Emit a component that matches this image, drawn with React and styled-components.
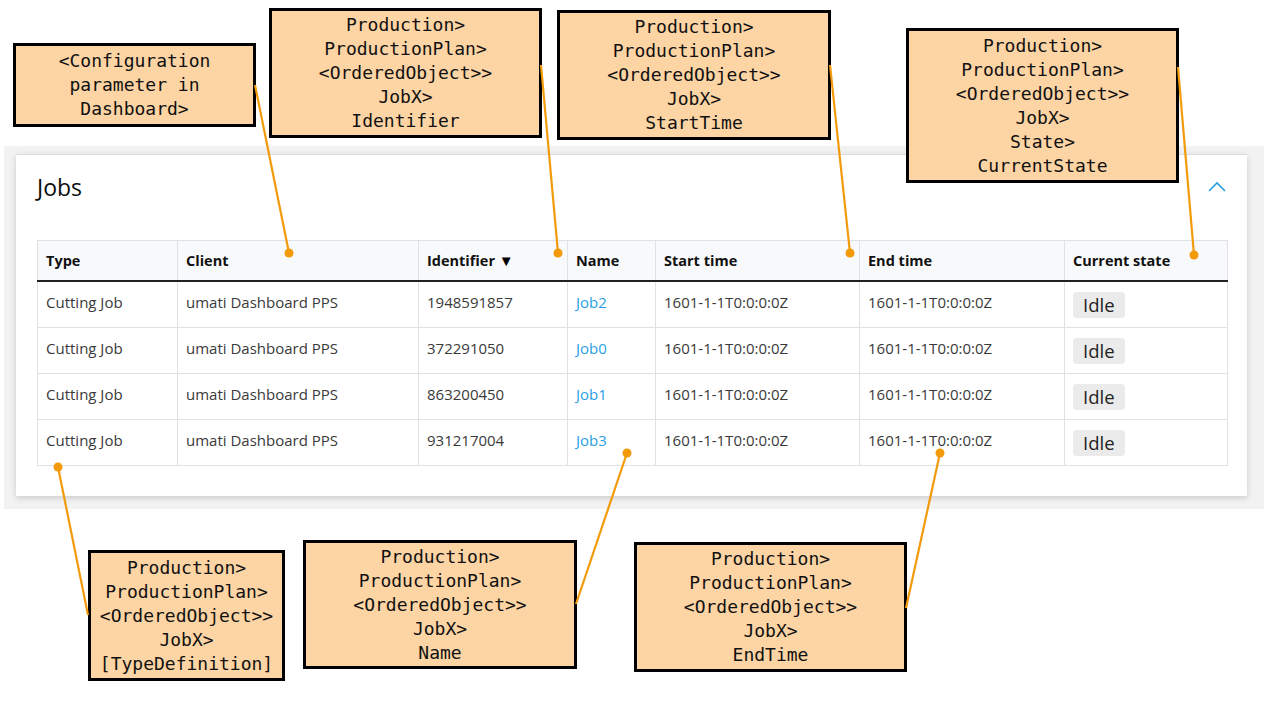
import React from "react";
import styled, { createGlobalStyle } from "styled-components";

const GlobalStyle = createGlobalStyle`
  html, body {
    margin: 0;
    padding: 0;
    background: #ffffff;
  }
`;

// whole annotated canvas
const Canvas = styled.div`
  position: relative;
  width: 1278px;
  height: 708px;
  overflow: hidden;
  font-family: "Open Sans", "Noto Sans", sans-serif;
`;

const Backdrop = styled.section`
  margin: 146px 0 0 4px;
  width: 1260px;
  box-sizing: border-box;
  padding: 8px 17px 13px 12px;
  background: #f2f2f3;
`;

const Card = styled.div`
  background: #ffffff;
  border-top: 1px solid #dcdcdc;
  box-shadow: 0 2px 6px rgba(0, 0, 0, 0.16);
  padding: 20px 20px 30px 21px;
`;

const CardHeader = styled.div`
  display: flex;
  justify-content: space-between;
  align-items: center;
  height: 24px;
  margin-bottom: 41px;
`;

const Title = styled.h2`
  margin: 0;
  font-size: 23px;
  line-height: 24px;
  font-weight: 400;
  color: #0d0d0d;
`;

const Toggle = styled.button`
  border: 0;
  background: none;
  padding: 0;
  margin-right: 1px;
  display: flex;
`;

const Table = styled.table`
  width: 1190px;
  table-layout: fixed;
  border-collapse: collapse;
  font-size: 15px;
  line-height: 21px;
`;

const Th = styled.th`
  text-align: left;
  font-size: 14.5px;
  font-weight: 700;
  color: #111;
  background: #f8f9fa;
  padding: 9px 8px;
  border: 1px solid #dee2e6;
  border-bottom: 2px solid #222;
`;

const SortArrow = styled.span`
  font-size: 15px;
  color: #000;
`;

const Td = styled.td`
  vertical-align: top;
  color: #3a3a3a;
  padding: 10px 8px 9px 8px;
  border: 1px solid #dee2e6;
  white-space: nowrap;
`;

const JobLink = styled.a`
  color: #2b9fe3;
  text-decoration: none;
`;

const Badge = styled.span`
  display: inline-block;
  padding: 1px 10px 2px 10px;
  border-radius: 4px;
  background: #ebebeb;
  color: #222;
  font-size: 18.5px;
  line-height: 23px;
`;

// annotation boxes
const Callout = styled.div`
  position: absolute;
  left: ${(p) => p.x}px;
  top: ${(p) => p.y}px;
  width: ${(p) => p.w}px;
  height: ${(p) => p.h}px;
  box-sizing: border-box;
  border: 3px solid #000;
  background: #fdd4a4;
  display: flex;
  flex-direction: column;
  justify-content: center;
  align-items: center;
  font-family: "DejaVu Sans Mono", "Liberation Mono", monospace;
  font-size: 18px;
  line-height: 24px;
  color: #111;
  text-align: center;
  white-space: nowrap;
  z-index: 2;
`;

const Connectors = styled.svg`
  position: absolute;
  left: 0;
  top: 0;
  pointer-events: none;
  z-index: 3;
`;

const columns = [140, 241, 149, 88, 204, 205, 163];

const jobs = [
  { id: "1948591857", name: "Job2" },
  { id: "372291050", name: "Job0" },
  { id: "863200450", name: "Job1" },
  { id: "931217004", name: "Job3" },
];

const path = ["Production>", "ProductionPlan>", "<OrderedObject>>", "JobX>"];

const callouts = [
  { x: 13, y: 43, w: 243, h: 84, lines: ["<Configuration", "parameter in", "Dashboard>"] },
  { x: 269, y: 8, w: 273, h: 130, lines: [...path, "Identifier"] },
  { x: 557, y: 10, w: 274, h: 130, lines: [...path, "StartTime"] },
  { x: 906, y: 28, w: 273, h: 155, lines: [...path, "State>", "CurrentState"] },
  { x: 88, y: 550, w: 197, h: 131, lines: [...path, "[TypeDefinition]"] },
  { x: 303, y: 540, w: 274, h: 129, lines: [...path, "Name"] },
  { x: 634, y: 542, w: 273, h: 130, lines: [...path, "EndTime"] },
];

// leader lines: box edge -> dot
const leaders = [
  { x1: 255, y1: 85, x2: 289, y2: 253 },
  { x1: 541, y1: 65, x2: 558, y2: 253 },
  { x1: 830, y1: 65, x2: 850, y2: 253 },
  { x1: 1178, y1: 67, x2: 1194, y2: 255 },
  { x1: 88, y1: 615, x2: 58, y2: 467 },
  { x1: 576, y1: 604, x2: 627, y2: 453 },
  { x1: 906, y1: 608, x2: 940, y2: 453 },
];

const ChevronUp = () => (
  <svg width="18" height="12" viewBox="0 0 18 12">
    <polyline points="1,10 9,2 17,10" fill="none" stroke="#2a9fdc" strokeWidth="1.6" />
  </svg>
);

const App = () => {
  return (
    <Canvas>
      <GlobalStyle />
      <Backdrop>
        <Card>
          <CardHeader>
            <Title>Jobs</Title>
            <Toggle aria-label="collapse">
              <ChevronUp />
            </Toggle>
          </CardHeader>
          <Table>
            <colgroup>
              {columns.map((w, i) => (
                <col key={i} style={{ width: w }} />
              ))}
            </colgroup>
            <thead>
              <tr>
                <Th>Type</Th>
                <Th>Client</Th>
                <Th>
                  Identifier <SortArrow>▼</SortArrow>
                </Th>
                <Th>Name</Th>
                <Th>Start time</Th>
                <Th>End time</Th>
                <Th>Current state</Th>
              </tr>
            </thead>
            <tbody>
              {jobs.map((job) => (
                <tr key={job.name}>
                  <Td>Cutting Job</Td>
                  <Td>umati Dashboard PPS</Td>
                  <Td>{job.id}</Td>
                  <Td>
                    <JobLink href="#">{job.name}</JobLink>
                  </Td>
                  <Td>1601-1-1T0:0:0:0Z</Td>
                  <Td>1601-1-1T0:0:0:0Z</Td>
                  <Td>
                    <Badge>Idle</Badge>
                  </Td>
                </tr>
              ))}
            </tbody>
          </Table>
        </Card>
      </Backdrop>

      {callouts.map((c, i) => (
        <Callout key={i} x={c.x} y={c.y} w={c.w} h={c.h}>
          {c.lines.map((l, j) => (
            <div key={j}>{l}</div>
          ))}
        </Callout>
      ))}

      <Connectors width="1278" height="708">
        {leaders.map((l, i) => (
          <g key={i}>
            <line x1={l.x1} y1={l.y1} x2={l.x2} y2={l.y2} stroke="#f39a0b" strokeWidth="2.2" />
            <circle cx={l.x2} cy={l.y2} r="4.5" fill="#f39a0b" />
          </g>
        ))}
      </Connectors>
    </Canvas>
  );
};

export default App;
